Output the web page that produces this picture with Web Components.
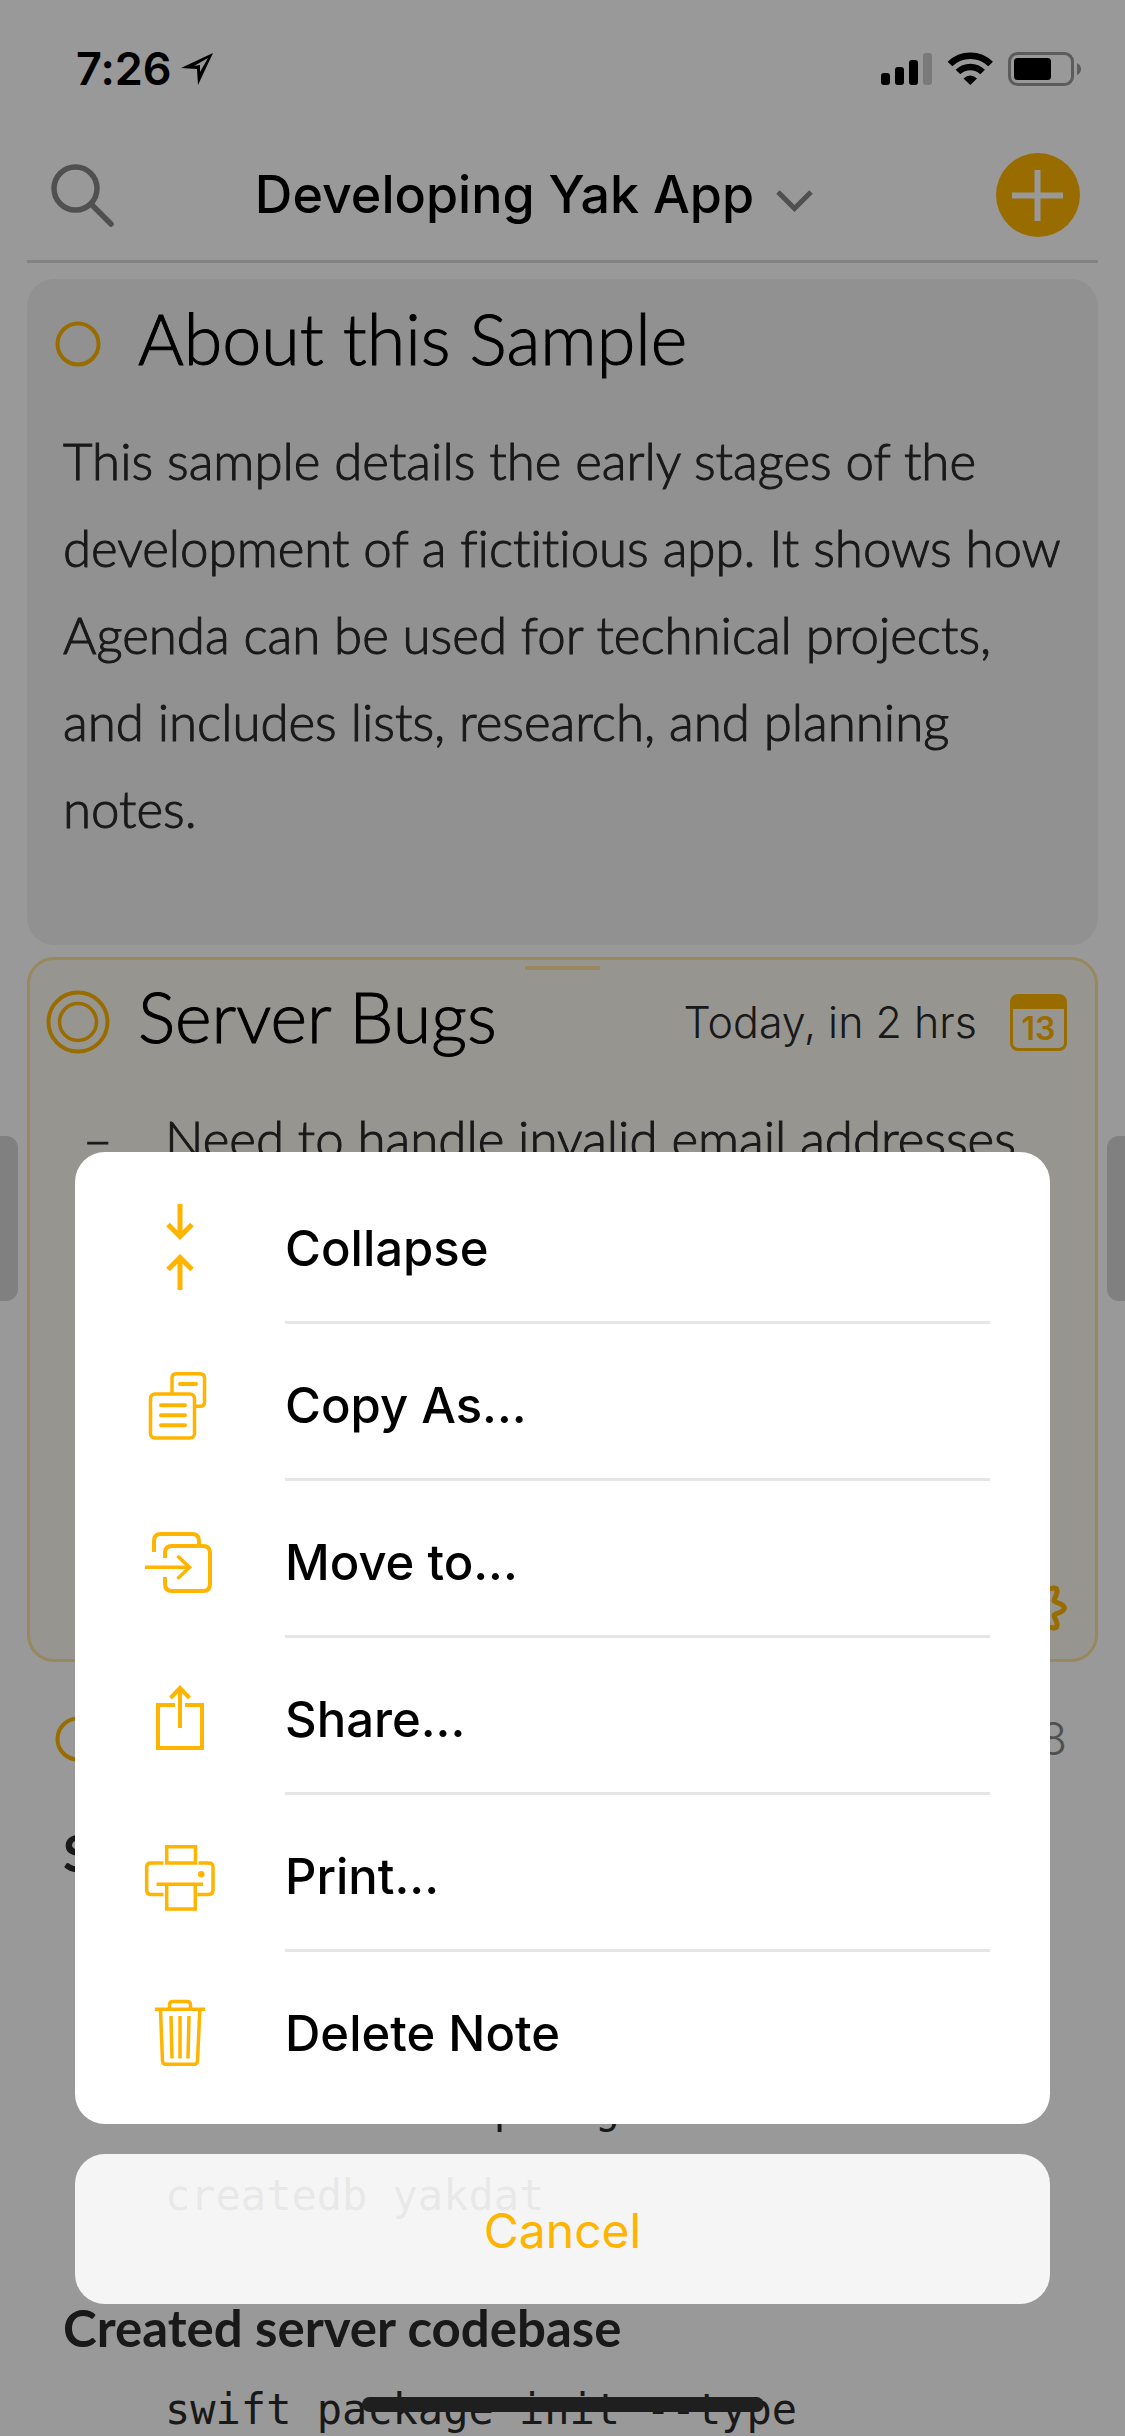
<!DOCTYPE html>
<html lang="en">
<head>
<meta charset="utf-8">
<meta name="viewport" content="width=device-width, initial-scale=1">
<title>Agenda</title>
<style>
  html, body { margin: 0; height: 100%; background: #fff; }
  body {
    --amber: #ffb400;
    --ink: #2a2a2a;
    --grey: #868686;
    --ui: Inter, "Liberation Sans", sans-serif;
    --text: Lato, "Open Sans", sans-serif;
    --mono: "DejaVu Sans Mono", "Liberation Mono", monospace;
    font-family: var(--text);
    font-variant-ligatures: none;
    color: var(--ink);
  }
</style>
</head>
<body>
<agenda-app>
  <status-bar time="7:26"></status-bar>
  <nav-bar>Developing Yak App</nav-bar>

  <note-card tone="plain">
    <span slot="title">About this Sample</span>
    <p>This sample details the early stages of the development of a fictitious app. It shows how Agenda can be used for technical projects, and includes lists, research, and planning notes.</p>
  </note-card>

  <note-card tone="selected">
    <span slot="title">Server Bugs</span>
    <calendar-date slot="date" day="13">Today, in 2 hrs</calendar-date>
    <ul><li><note-dash></note-dash>Need to handle invalid email addresses.</li></ul>
  </note-card>

  <note-card tone="bare">
    <span slot="date" class="faded">2018</span>
    <h3>Setup</h3>
    <pre>


brew install postgres
createdb yakdat</pre>
    <h3>Created server codebase</h3>
    <pre>swift package init --type</pre>
  </note-card>

  <action-sheet slot="overlay">
    <action-item icon="collapse">Collapse</action-item>
    <action-item icon="copy">Copy As...</action-item>
    <action-item icon="move">Move to...</action-item>
    <action-item icon="share">Share...</action-item>
    <action-item icon="print">Print...</action-item>
    <action-item icon="trash" last>Delete Note</action-item>
  </action-sheet>
</agenda-app>

<script>
const define = (name, render) => customElements.define(name, class extends HTMLElement {
  constructor() { super(); this.attachShadow({ mode: "open" }); }
  connectedCallback() { this.shadowRoot.innerHTML = render(this); }
});

define("agenda-app", () => `
  <style>
    :host { display: block; position: relative; height: 100vh; overflow: hidden; background: #fff; }
    .drawer { position: absolute; top: 1136px; width: 18px; height: 165px; background: #d5d5d5; }
    .left { left: 0; border-radius: 0 12px 12px 0; }
    .right { right: 0; border-radius: 12px 0 0 12px; }
    .home { position: absolute; left: 50%; bottom: 24px; width: 402px; height: 15px; margin-left: -201px; border-radius: 8px; background: #1f1f1f; }
  </style>
  <main><slot></slot></main>
  <div class="drawer left"></div>
  <div class="drawer right"></div>
  <slot name="overlay"></slot>
  <div class="home"></div>`);

define("status-bar", el => `
  <style>
    :host { display: flex; justify-content: space-between; align-items: center; height: 132px; padding: 6px 44px 0 76px; box-sizing: border-box; font-family: var(--ui); color: #000; }
    .time { display: flex; align-items: center; gap: 9px; font-size: 45px; line-height: 54px; font-weight: 600; }
    svg { display: block; }
  </style>
  <div class="time"><span>${el.getAttribute("time")}</span>
    <svg width="32" height="32" viewBox="0 0 32 32"><path fill-rule="evenodd" d="M0 15L32 0L17 32L16 16ZM13 13L19 12L19 19L27 5Z"/></svg>
  </div>
  <svg width="200" height="34" viewBox="0 0 200 34">
    <rect x="0" y="21" width="9" height="12" rx="3"/><rect x="14" y="15" width="9" height="18" rx="3"/>
    <rect x="28" y="8" width="9" height="25" rx="3"/><rect x="42" y="1" width="9" height="32" rx="3" fill="#ccc"/>
    <g fill="none" stroke="#000" stroke-width="6.6"><path d="M69 12A29 29 0 0 1 109.600 12"/><path d="M77 20A17.500 17.500 0 0 1 101.600 20"/></g>
    <path d="M82.500 26.500Q89.300 20.500 96 26.500L89.300 33Z"/>
    <rect x="128.500" y="1.500" width="63" height="31" rx="8" fill="none" stroke="#999" stroke-width="3"/>
    <rect x="133" y="6" width="37" height="22" rx="3.500"/>
    <path d="M196 11Q200 13 200 17T196 23Z" fill="#999"/>
  </svg>`);

define("nav-bar", () => `
  <style>
    :host { display: flex; justify-content: space-between; align-items: center; height: 131px; margin: 0 27px; padding: 0 18px 2px 24px; box-sizing: border-box; border-bottom: 3px solid #d9d9d9; }
    button { display: flex; align-items: center; border: 0; padding: 0; background: none; color: #000; }
    .project { gap: 22px; padding-right: 42px; font: 500 52px/64px var(--ui); }
    .add { width: 84px; height: 84px; justify-content: center; border-radius: 50%; background: var(--amber); }
    svg { display: block; fill: none; stroke: var(--grey); }
    .project svg { margin-top: 12px; }
  </style>
  <button aria-label="Search"><svg width="63" height="63" viewBox="0 0 63 63" stroke-width="5.500"><circle cx="24.500" cy="24.500" r="21.500"/><path stroke-linecap="round" d="M40 40L60 60"/></svg></button>
  <button class="project"><slot></slot><svg width="37" height="22" viewBox="0 0 37 22" stroke-width="5"><path d="M2 2L18.500 18.500L35 2"/></svg></button>
  <button class="add" aria-label="Add note"><svg width="51" height="51" viewBox="0 0 51 51" style="stroke:#fff" stroke-width="6"><path d="M25.500 0V51M0 25.500H51"/></svg></button>`);

define("calendar-date", el => `
  <style>
    :host { display: flex; align-items: center; gap: 33px; font: 300 43px/54px var(--ui); }
    .page { display: flex; flex-direction: column; box-sizing: border-box; width: 57px; height: 57px; border: 3px solid var(--amber); border-top-width: 15px; border-radius: 8px; font-size: 32px; line-height: 40px; font-weight: 600; text-align: center; color: var(--amber); }
  </style>
  <slot></slot><span class="page">${el.getAttribute("day")}</span>`);

define("note-card", el => {
  const tone = el.getAttribute("tone");
  const ring = tone === "selected"
    ? `<circle cx="32" cy="32" r="29.500"/><circle cx="32" cy="32" r="18.500" stroke-width="3.500"/>`
    : `<circle cx="32" cy="32" r="20.500"/>`;
  const gear = Array.from({ length: 64 }, (_, i) => {
    const a = i * Math.PI / 32, r = 23 + 4.5 * Math.cos(8 * a);
    return (30 + r * Math.cos(a)).toFixed(1) + " " + (30 + r * Math.sin(a)).toFixed(1);
  }).join("L");
  return `
  <style>
    :host { display: flex; flex-direction: column; position: relative; box-sizing: border-box; margin: 12px 27px 0; border: 3px solid transparent; border-radius: 27px; padding: 18px 28px 21px 16px; }
    :host([tone=plain]) { margin-top: 16px; background: #f2f2f2; padding-bottom: 90px; }
    :host([tone=selected]) { min-height: 705px; border-color: #ffe19b; background: #fcf9f1; }
    header { display: flex; align-items: center; height: 88px; margin-bottom: 29px; }
    header svg { width: 64px; height: 64px; margin-right: 28px; fill: none; stroke: var(--amber); stroke-width: 4; }
    h2 { flex: 1; margin: 0; padding-bottom: 12px; font-size: 70px; line-height: 78px; font-weight: 300; color: #000; -webkit-text-stroke: 1px #000; }
    .body { flex: 1; padding: 0 4px 0 17px; font-size: 51px; line-height: 87px; }
    .grip { position: absolute; top: 6px; left: 50%; width: 75px; height: 4px; margin-left: -38px; background: #ffe19b; }
    .settings { align-self: flex-end; border: 0; padding: 0; background: none; }
    .settings svg { display: block; fill: none; stroke: var(--amber); stroke-width: 5; }
    ::slotted(p), ::slotted(ul) { margin: 0; padding: 0; list-style: none; font-weight: 300; -webkit-text-stroke: 1px var(--ink); }
    ::slotted(h3) { margin: 0; padding-top: 3px; font-size: 51px; line-height: 76px; font-weight: 700; }
    ::slotted(pre) { margin: 0 0 48px 102px; font: 42px/87px var(--mono); }
    ::slotted(.faded) { font: 300 45px/54px var(--ui); color: var(--grey); }
  </style>
  ${tone === "selected" ? `<div class="grip"></div>` : ""}
  <header><svg viewBox="0 0 64 64">${ring}</svg><h2><slot name="title"></slot></h2><slot name="date"></slot></header>
  <div class="body"><slot></slot></div>
  ${tone === "selected" ? `<button class="settings" aria-label="Note settings"><svg width="60" height="60" viewBox="0 0 60 60"><path stroke-linejoin="round" d="M${gear}Z"/><circle cx="30" cy="30" r="9"/></svg></button>` : ""}`;
});

define("note-dash", () => `
  <style>:host { display: inline-block; box-sizing: border-box; width: 102px; padding-left: 20px; }</style>–`);

const icons = {
  collapse: `<path stroke-width="5" d="M45 2V35M33 22.500L45 34.500L57 22.500M45 88V55M33 67.500L45 55.500L57 67.500"/>`,
  copy: `<rect x="15.500" y="35" width="44" height="44" rx="4.500"/><path d="M37 34V19Q37 14.700 41 14.700H65Q69.500 14.700 69.500 19V43Q69.500 47.300 65 47.300H61"/><path stroke-width="4" stroke-linecap="round" d="M45 25H61M26 46.300H50M26 56.300H50M26 66.300H50"/>`,
  move: `<path stroke-width="4" d="M19 36V25Q19 18 26 18H57Q64 18 64 25V29M30 42V37Q30 30 37 30H68Q75 30 75 37V68Q75 75 68 75H37Q30 75 30 68V61"/><path d="M10 51.300H54M42.500 40L54.500 51.300L42.500 62.700"/>`,
  share: `<path stroke-width="4" d="M40 32H23V75H67V32H50M45 55V15M35.500 25L45 15L54.500 25"/>`,
  print: `<path d="M31.700 16.700H60.500V33H31.700ZM28.500 33H16Q11.700 33 11.700 37V60Q11.700 64.500 16 64.500H28.500M63.500 33H73.500Q78 33 78 37V60Q78 64.500 73.500 64.500H62.500M21.500 54.300H68M31.700 54.300V79H60.300V54.300" stroke-linecap="butt"/><circle cx="66.300" cy="44.300" r="3.300" fill="#ffb400" stroke="none"/>`,
  trash: `<path d="M20 22.300H70M34.500 22V18Q34.500 14.500 38 14.500H52Q55.500 14.500 55.500 18V22M25.500 23L27.500 74Q27.700 77.300 31 77.300H59Q62.300 77.300 62.500 74L64.800 23M36 29L37 71.500M45 29V71.500M54 29L53 71.500"/>`
};

define("action-item", el => `
  <style>
    :host { display: block; }
    button { display: flex; align-items: stretch; width: 100%; height: 157px; border: 0; padding: 0 60px; background: none; text-align: left; color: #000; }
    svg { flex: none; width: 90px; height: 90px; margin: 35px 60px 0 0; fill: none; stroke: var(--amber); stroke-width: 3.500; }
    span { flex: 1; display: flex; align-items: center; padding-top: 9px; border-bottom: 3px solid #e6e6e6; font: 500 49px/60px var(--ui); }
    :host([last]) span { border-color: transparent; }
  </style>
  <button><svg viewBox="0 0 90 90">${icons[el.getAttribute("icon")]}</svg><span><slot></slot></span></button>`);

define("action-sheet", () => `
  <style>
    :host { position: absolute; inset: 0; display: flex; flex-direction: column; justify-content: flex-end; gap: 30px; box-sizing: border-box; padding: 0 75px 132px; background: rgba(0, 0, 0, .4); }
    .menu { padding: 15px 0; border-radius: 30px; background: #fff; }
    .cancel { height: 150px; border: 0; border-radius: 30px; padding: 4px 0 0; background: rgba(255, 255, 255, .9); font: 400 48px/60px var(--ui); color: var(--amber); }
  </style>
  <div class="menu"><slot></slot></div>
  <button class="cancel">Cancel</button>`);
</script>
</body>
</html>
